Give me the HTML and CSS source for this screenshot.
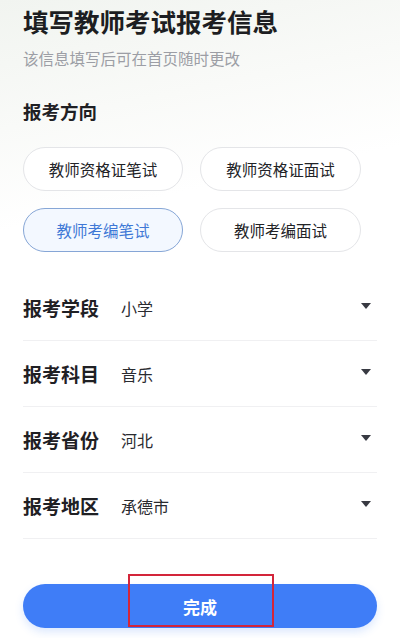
FILE: index.html
```html
<!DOCTYPE html>
<html lang="zh-CN">
<head>
<meta charset="utf-8">
<title>填写教师考试报考信息</title>
<link rel="stylesheet" href="styles.css">
</head>
<body>
<div class="page">
  <h1 class="title">填写教师考试报考信息</h1>
  <p class="subtitle">该信息填写后可在首页随时更改</p>
  <h2 class="section">报考方向</h2>
  <div class="options">
    <div class="opt">教师资格证笔试</div>
    <div class="opt">教师资格证面试</div>
    <div class="opt opt-active">教师考编笔试</div>
    <div class="opt">教师考编面试</div>
  </div>
  <div class="fields">
    <div class="field"><span class="label">报考学段</span><span class="value">小学</span><span class="arrow"></span></div>
    <div class="field"><span class="label">报考科目</span><span class="value">音乐</span><span class="arrow"></span></div>
    <div class="field"><span class="label">报考省份</span><span class="value">河北</span><span class="arrow"></span></div>
    <div class="field"><span class="label">报考地区</span><span class="value">承德市</span><span class="arrow"></span></div>
  </div>
  <div class="submit-wrap">
    <div class="submit">完成</div>
    <div class="highlight"></div>
  </div>
</div>
</body>
</html>
```
FILE: styles.css
```css
* { box-sizing: border-box; }
html, body { margin: 0; padding: 0; }
body {
  width: 400px;
  height: 638px;
  overflow: hidden;
  font-family: "Noto Sans CJK SC", "Noto Sans", sans-serif;
  background: linear-gradient(168deg, #f1f4f0 0%, #f9faf8 18%, #ffffff 32%);
  color: #1f2024;
}
.page {
  padding: 6px 23px 0 23px;
}
.title {
  margin: 0;
  font-size: 25.5px;
  line-height: 30px;
  font-weight: 700;
  color: #1d1e22;
}
.subtitle {
  margin: 12px 0 0 0;
  font-size: 15.5px;
  line-height: 20px;
  color: #9c9ea5;
}
.section {
  margin: 30px 0 0 0;
  font-size: 18.5px;
  line-height: 26px;
  font-weight: 700;
  color: #1f2024;
}
.options {
  margin-top: 23px;
  display: grid;
  grid-template-columns: 160px 161px;
  column-gap: 17px;
  row-gap: 17px;
}
.opt {
  height: 44px;
  border: 1px solid #e4e5e8;
  border-radius: 22px;
  background: #ffffff;
  display: flex;
  align-items: center;
  justify-content: center;
  font-size: 15.5px;
  color: #222327;
}
.opt-active {
  background: #f3f8ff;
  border-color: #86a6d6;
  color: #3f78d6;
}
.fields {
  margin-top: 23px;
}
.field {
  height: 66px;
  border-bottom: 1px solid #f0f0f2;
  display: flex;
  align-items: center;
}
.label {
  font-size: 19px;
  font-weight: 700;
  color: #1f2024;
  width: 98px;
}
.value {
  flex: 1;
  font-size: 16px;
  color: #2a2b30;
}
.arrow {
  width: 0;
  height: 0;
  border-left: 5px solid transparent;
  border-right: 5px solid transparent;
  border-top: 6px solid #383a42;
  margin-right: 6px;
  margin-top: -3px;
}
.submit-wrap {
  position: relative;
  margin-top: 45px;
}
.submit {
  height: 44px;
  border-radius: 22px;
  background: #3f7df7;
  color: #ffffff;
  font-size: 17px;
  font-weight: 700;
  display: flex;
  align-items: center;
  justify-content: center;
  box-shadow: 0 4px 8px rgba(63, 125, 247, 0.18);
}
.highlight {
  position: absolute;
  left: 105px;
  top: -10px;
  width: 146px;
  height: 53px;
  border: 2.5px solid #d3253a;
}
```
